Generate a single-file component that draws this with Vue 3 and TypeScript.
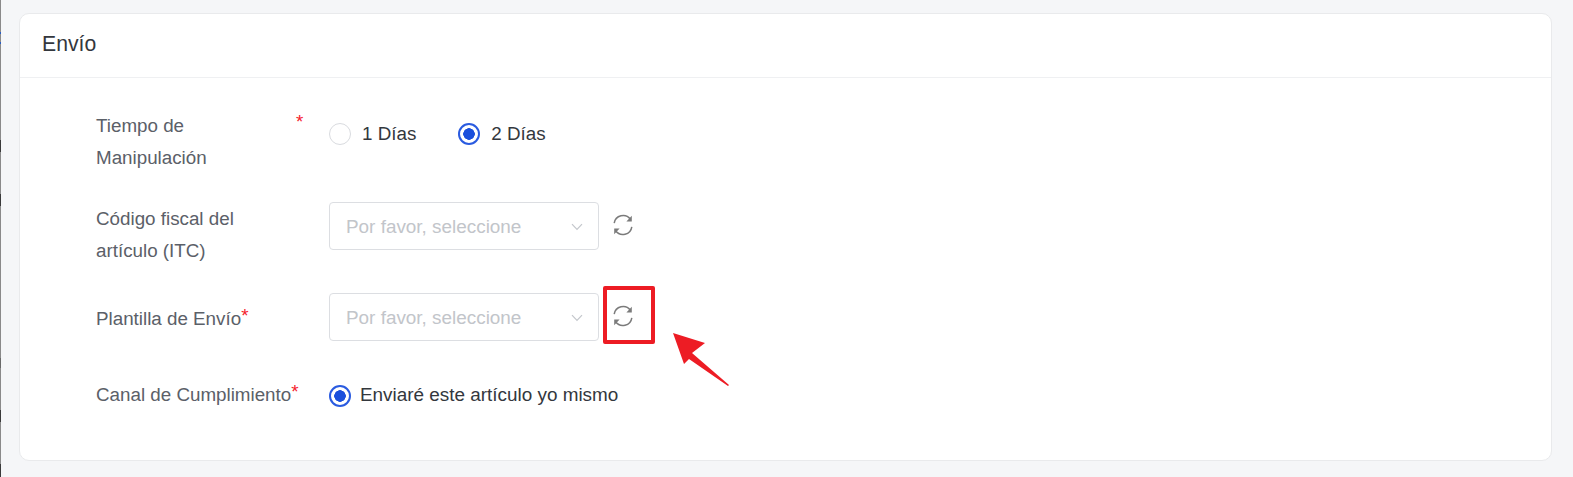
<script setup lang="ts">
interface Opt { label: string; checked: boolean }
const days: Opt[] = [
  { label: '1 Días', checked: false },
  { label: '2 Días', checked: true },
]
</script>

<template>
  <div class="page">
    <div class="edge"></div>
    <section class="card">
      <header class="head">Envío</header>
      <div class="body">
        <div class="row r1">
          <div class="label wide"><span class="txt">Tiempo de Manipulación</span><span class="star corner">*</span></div>
          <div class="radios">
            <label v-for="o in days" :key="o.label" class="radio">
              <span class="dot" :class="{ on: o.checked }"></span>{{ o.label }}
            </label>
          </div>
        </div>
        <div class="row r2">
          <div class="label"><span class="txt">Código fiscal del artículo (ITC)</span></div>
          <div class="select"><span>Por favor, seleccione</span>
            <svg class="chev" viewBox="0 0 12 8" width="12" height="8"><path d="M1 1.2 6 6.5 11 1.2" fill="none" stroke="#c4c7cc" stroke-width="1.2"/></svg>
          </div>
          <span class="refresh">
            <svg viewBox="0 0 24 24" width="24" height="24"><path d="M3.2 10.2A9 9 0 0 1 19.4 6.2M20.8 13.8A9 9 0 0 1 4.6 17.8" fill="none" stroke="#7b7b7b" stroke-width="1.5"/><path d="M20.8 2.8v5.600h-5.400zM3.2 21.200v-5.600h5.400z" fill="#7b7b7b"/></svg>
          </span>
        </div>
        <div class="row r3">
          <div class="label line"><span class="txt">Plantilla de Envío</span><span class="star">*</span></div>
          <div class="select"><span>Por favor, seleccione</span>
            <svg class="chev" viewBox="0 0 12 8" width="12" height="8"><path d="M1 1.2 6 6.5 11 1.2" fill="none" stroke="#c4c7cc" stroke-width="1.2"/></svg>
          </div>
          <span class="refresh boxed">
            <svg viewBox="0 0 24 24" width="24" height="24"><path d="M3.2 10.2A9 9 0 0 1 19.4 6.2M20.8 13.8A9 9 0 0 1 4.6 17.8" fill="none" stroke="#7b7b7b" stroke-width="1.5"/><path d="M20.8 2.8v5.600h-5.400zM3.2 21.200v-5.600h5.400z" fill="#7b7b7b"/></svg>
          </span>
        </div>
        <div class="row r4">
          <div class="label plain"><span class="txt">Canal de Cumplimiento</span><span class="star">*</span></div>
          <label class="radio tight"><span class="dot on"></span><span class="lift">Enviaré este artículo yo mismo</span></label>
        </div>
      </div>
      <svg class="arrow" viewBox="0 0 60 60" width="60" height="60"><path d="M1 1 33 11 20 21 57 53 56 54 17 27 12 32z" fill="#ed1c24"/></svg>
    </section>
  </div>
</template>

<style>
html, body { margin: 0; background: #f5f6f8; }
</style>

<style scoped>
.page {
  box-sizing: border-box;
  position: relative;
  width: 1573px;
  height: 477px;
  padding: 13px 21px 16px 19px;
  background: #f5f6f8;
  font-family: "Liberation Sans", Arial, sans-serif;
}
.edge {
  position: absolute;
  left: 0;
  top: 0;
  width: 1px;
  height: 477px;
  background: linear-gradient(to bottom,
    #8a8a8a 0 32px, #2a5bc0 32px 34px, #8a8a8a 34px 42px, #2a5bc0 42px 44px,
    #8a8a8a 44px 140px, #3a3a3a 140px 152px, #8a8a8a 152px 194px, #3a3a3a 194px 206px,
    #8a8a8a 206px 358px, #6a6a6a 358px 368px, #8a8a8a 368px 410px, #3a3a3a 410px 422px,
    #8a8a8a 422px 464px, #3a3a3a 464px 477px);
}
.card {
  box-sizing: border-box;
  position: relative;
  height: 448px;
  background: #fff;
  border: 1px solid #e9eaec;
  border-radius: 10px;
}
.head {
  box-sizing: border-box;
  height: 64px;
  padding: 0 22px;
  line-height: 60px;
  font-size: 21.2px;
  color: #33373d;
  border-bottom: 1px solid #eff0f2;
}
.body { padding: 31px 0 0 76px; }
.row { display: flex; align-items: flex-start; }
.r2 { margin-top: 28px; }
.r3 { margin-top: 26px; }
.r4 { margin-top: 36px; }
.label {
  position: relative;
  box-sizing: border-box;
  flex: none;
  width: 233px;
  padding-top: 1px;
  font-size: 18.8px;
  line-height: 32px;
  color: #5b6068;
}
.label.plain { padding-top: 0; }
.label .txt { display: inline-block; max-width: 180px; vertical-align: top; }
.r3 .label .txt, .r4 .label .txt { max-width: none; }
.line { line-height: 48px; padding-top: 2px; }
.star { color: #f5222d; font-size: 18.8px; line-height: 1; vertical-align: 3px; }
.star.corner { position: absolute; left: 200px; top: 4px; vertical-align: baseline; }
.radios { display: flex; gap: 42px; margin-top: 9px; }
.radio {
  display: inline-flex;
  align-items: center;
  height: 32px;
  font-size: 18.8px;
  color: #33373d;
}
.tight { font-size: 18.9px; margin-top: 1px; }
.lift { margin-top: -3px; }
.dot {
  box-sizing: border-box;
  width: 22px;
  height: 22px;
  margin-right: 11px;
  border: 1px solid #d9dbdf;
  border-radius: 50%;
  background: #fff;
}
.dot.on {
  border: 2px solid #2a5be0;
  background: radial-gradient(circle, #1a4fdc 0 5.500px, #fff 6px);
}
.tight .dot { margin-right: 9px; }
.select {
  box-sizing: border-box;
  display: flex;
  align-items: center;
  justify-content: space-between;
  flex: none;
  width: 270px;
  height: 48px;
  padding: 2px 15px 0 16px;
  border: 1px solid #dcdee2;
  border-radius: 4px;
  font-size: 18.900px;
  color: #c2c5ca;
}
.chev { margin-top: -1px; }
.refresh {
  display: flex;
  align-items: center;
  justify-content: center;
  box-sizing: border-box;
  margin-left: 12px;
  width: 24px;
  height: 45px;
}
.refresh.boxed { position: relative; }
.refresh.boxed::after {
  content: "";
  position: absolute;
  left: -8px;
  top: -7px;
  width: 52px;
  height: 58px;
  border: 4px solid #ed1c24;
  border-radius: 2px;
  box-sizing: border-box;
}
.arrow { position: absolute; left: 652px; top: 318px; }
</style>
